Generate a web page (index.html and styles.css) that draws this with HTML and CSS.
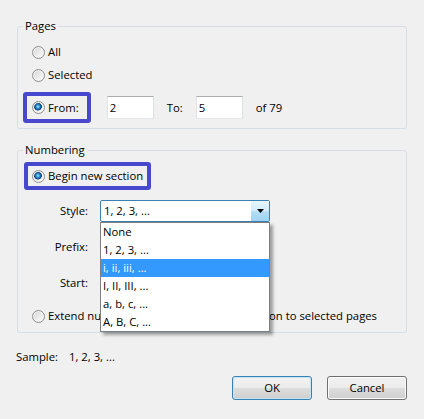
FILE: index.html
```html
<!DOCTYPE html>
<html lang="en">
<head>
<meta charset="utf-8">
<title>Page Numbering</title>
<link rel="stylesheet" href="styles.css">
</head>
<body>
<div class="dialog">
  <fieldset class="group pages">
    <legend>Pages</legend>
    <label class="radio-row"><span class="radio"></span>All</label>
    <label class="radio-row row-selected"><span class="radio"></span>Selected</label>
    <div class="range-row">
      <label class="highlight hl-from"><span class="radio checked"></span>From:</label>
      <span class="textbox tb-small">2</span>
      <span class="to-label">To:</span>
      <span class="textbox tb-small">5</span>
      <span class="of-label">of 79</span>
    </div>
  </fieldset>

  <fieldset class="group numbering">
    <legend>Numbering</legend>
    <label class="highlight hl-begin"><span class="radio checked"></span>Begin new section</label>
    <div class="form-grid">
      <span class="field-label">Style:</span>
      <div class="combo">
        <span class="combo-value">1, 2, 3, ...</span>
        <span class="combo-btn"><svg width="7" height="4" viewBox="0 0 7 4"><path d="M0 0H7L3.5 4Z" fill="#000"/></svg></span>
        <ul class="dropdown">
          <li>None</li>
          <li>1, 2, 3, ...</li>
          <li class="active">i, ii, iii, ...</li>
          <li>I, II, III, ...</li>
          <li>a, b, c, ...</li>
          <li>A, B, C, ...</li>
        </ul>
      </div>
      <span class="field-label">Prefix:</span>
      <span class="textbox tb-wide"></span>
      <span class="field-label">Start:</span>
      <span class="textbox tb-start"></span>
    </div>
    <label class="radio-row extend"><span class="radio"></span>Extend numbering used in preceding section to selected pages</label>
  </fieldset>

  <div class="sample-row"><span class="sample-label">Sample:</span><span>1, 2, 3, ...</span></div>

  <div class="buttons">
    <button class="btn btn-default">OK</button>
    <button class="btn">Cancel</button>
  </div>
</div>
</body>
</html>
```

FILE: styles.css
```css
html, body {
  margin: 0;
  padding: 0;
  background: #f0f0f0;
}

body {
  font-family: "Open Sans", "Liberation Sans", sans-serif;
  font-size: 11.3px;
  line-height: 16px;
  color: #000;
}

.dialog {
  padding: 18px 17px 0;
}

.group {
  margin: 0;
  padding: 0 14px;
  border: 1px solid #d5dfe5;
  border-radius: 3px;
  min-inline-size: 0;
}

.group legend {
  margin-left: -9px;
  padding: 0 2px;
  line-height: 16px;
}

.pages {
  padding-top: 8px;
  padding-bottom: 5px;
}

.numbering {
  margin-top: 13px;
  padding-top: 4px;
  padding-bottom: 6px;
}

.radio-row {
  display: flex;
  align-items: center;
  height: 20px;
}

.row-selected {
  margin-top: 3px;
}

.radio {
  flex: none;
  box-sizing: border-box;
  width: 13px;
  height: 13px;
  margin-right: 3px;
  border-radius: 50%;
  border: 1px solid #8e8f8f;
  background: linear-gradient(135deg, #d2d2d2 0%, #ececec 55%, #fdfdfd 100%);
  box-shadow: inset 0 0 0 1px #f4f4f4;
}

.radio.checked {
  background:
    radial-gradient(circle at 45% 42%, #b4ecff 0, #47a7e0 1.3px, #1c6aae 2.6px, #0d3d70 3.6px, rgba(13, 61, 112, 0) 4.2px),
    linear-gradient(135deg, #d2d2d2 0%, #ececec 55%, #fdfdfd 100%);
}

.range-row {
  display: flex;
  align-items: center;
  margin-top: 7px;
}

.highlight {
  display: flex;
  align-items: center;
  border: 4px solid #4848cf;
  border-radius: 3px;
}

.hl-from {
  height: 23px;
  margin-left: -9px;
  padding: 0 8px 0 5px;
}

.hl-begin {
  display: inline-flex;
  height: 20px;
  margin-left: -8px;
  padding: 0 4px;
}

.textbox {
  box-sizing: border-box;
  display: block;
  height: 23px;
  background: #fff;
  border: 1px solid;
  border-color: #abadb3 #dbdfe6 #e3e9ef #e2e3ea;
  padding: 0 2px;
  line-height: 21px;
}

.tb-small {
  width: 47px;
  margin-left: 16px;
}

.range-row .to-label {
  margin-left: 13px;
}

.range-row .to-label + .tb-small {
  margin-left: 13px;
}

.of-label {
  margin-left: 13px;
}

.form-grid {
  display: grid;
  grid-template-columns: 56px 170px;
  grid-auto-rows: 22px;
  column-gap: 12px;
  row-gap: 14px;
  align-items: center;
  margin-top: 10px;
}

.field-label {
  text-align: right;
}

.tb-wide,
.tb-start {
  height: 22px;
  width: 170px;
}

.combo {
  position: relative;
  box-sizing: border-box;
  height: 22px;
  display: flex;
  align-items: center;
  background: #fff;
  border: 1px solid #3c7fb1;
  border-radius: 2px;
}

.combo-value {
  flex: 1;
  padding-left: 3px;
}

.combo-btn {
  align-self: stretch;
  width: 18px;
  display: flex;
  align-items: center;
  justify-content: center;
  background: linear-gradient(#e6f5fd 0%, #d3edfb 50%, #b5def6 50%, #9fd2f1 100%);
}

.dropdown {
  position: absolute;
  z-index: 10;
  top: 21px;
  left: -1px;
  box-sizing: border-box;
  width: 170px;
  margin: 0;
  padding: 0;
  list-style: none;
  background: #fff;
  border: 1px solid #7f7f7f;
  box-shadow: 3px 3px 3px rgba(0, 0, 0, 0.35);
}

.dropdown li {
  height: 18px;
  line-height: 18px;
  padding-left: 2px;
}

.dropdown li.active {
  background: #3399ff;
  color: #fff;
}

.extend {
  margin-top: 12px;
}

.sample-row {
  display: flex;
  margin: 16px 0 0 -1px;
  line-height: 16px;
}

.sample-label {
  width: 53px;
}

.buttons {
  display: flex;
  justify-content: flex-end;
  gap: 15px;
  margin-top: 11px;
}

.btn {
  box-sizing: border-box;
  width: 80px;
  height: 24px;
  padding: 0;
  font: inherit;
  color: #000;
  border: 1px solid #707070;
  border-radius: 3px;
  background: linear-gradient(#f2f2f2 0%, #ebebeb 50%, #dddddd 50%, #cfcfcf 100%);
  box-shadow: inset 0 0 0 1px #fbfbfb;
}

.btn-default {
  border-color: #3c7fb1;
  box-shadow: inset 0 0 0 1px #bfe6f8;
}
```
